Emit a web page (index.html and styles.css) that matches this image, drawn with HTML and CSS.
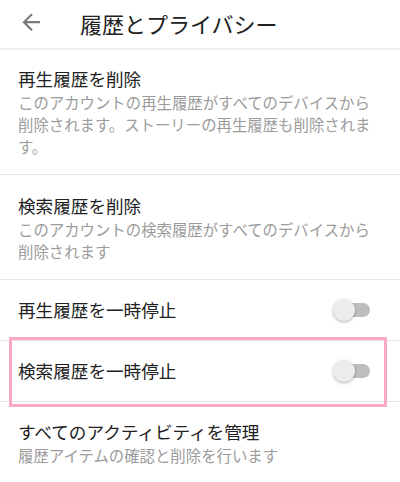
FILE: index.html
```html
<!DOCTYPE html>
<html lang="ja">
<head>
<meta charset="utf-8">
<link rel="stylesheet" href="styles.css">
</head>
<body>
<div class="screen">
  <header class="appbar">
    <svg class="back" viewBox="0 0 24 24" width="26.4" height="26.4"><path d="M20 11H7.83l5.59-5.59L12 4l-8 8 8 8 1.41-1.41L7.83 13H20v-2z" fill="#7a7a7a"/></svg>
    <h1 class="title">履歴とプライバシー</h1>
  </header>
  <div class="list">
    <div class="item">
      <div class="item-title">再生履歴を削除</div>
      <div class="item-desc">このアカウントの再生履歴がすべてのデバイスから削除されます。ストーリーの再生履歴も削除されます。</div>
    </div>
    <div class="item">
      <div class="item-title">検索履歴を削除</div>
      <div class="item-desc">このアカウントの検索履歴がすべてのデバイスから削除されます</div>
    </div>
    <div class="item toggle-row">
      <div class="item-title">再生履歴を一時停止</div>
      <div class="switch"><span class="track"></span><span class="thumb"></span></div>
    </div>
    <div class="item toggle-row">
      <div class="item-title">検索履歴を一時停止</div>
      <div class="switch"><span class="track"></span><span class="thumb"></span></div>
    </div>
    <div class="item last">
      <div class="item-title">すべてのアクティビティを管理</div>
      <div class="item-desc">履歴アイテムの確認と削除を行います</div>
    </div>
  </div>
  <div class="highlight"></div>
</div>
</body>
</html>
```

FILE: styles.css
```css
html, body {
  margin: 0;
  padding: 0;
  background: #ffffff;
}
body {
  font-family: "Noto Sans CJK JP", "Noto Sans", sans-serif;
  color: #212121;
}
.screen {
  position: relative;
  width: 400px;
  height: 482px;
  overflow: hidden;
  background: #ffffff;
}
.appbar {
  position: relative;
  z-index: 1;
  height: 48px;
  display: flex;
  align-items: center;
  padding-left: 17.6px;
  background: #ffffff;
  box-shadow: 0 1px 3px rgba(0, 0, 0, 0.12);
  box-sizing: border-box;
}
.back {
  display: block;
  flex: none;
  margin-top: -3px;
}
.title {
  margin: 0 0 0 36px;
  font-size: 22px;
  font-weight: 400;
  line-height: 26px;
  margin-top: -3px;
  color: #212121;
}
.list {
  display: flex;
  flex-direction: column;
}
.item {
  padding: 19px 18px 17px 18px;
  border-bottom: 1px solid #e6e6e6;
}
.item-title {
  font-size: 17.6px;
  line-height: 24px;
  color: #212121;
}
.item-desc {
  font-size: 15.4px;
  line-height: 22px;
  color: #9b9b9b;
}
.toggle-row {
  height: 60px;
  padding: 0 30px 0 18px;
  display: flex;
  align-items: center;
  justify-content: space-between;
}
.toggle-row .item-title {
  margin-top: -1px;
}
.last {
  padding-top: 18px;
  border-bottom: none;
}
.switch {
  position: relative;
  width: 37px;
  height: 22px;
  flex: none;
}
.track {
  position: absolute;
  left: 2px;
  right: 0;
  top: 4px;
  height: 14px;
  border-radius: 7px;
  background: #bdbdbd;
}
.thumb {
  position: absolute;
  left: 0;
  top: 0;
  width: 22px;
  height: 22px;
  border-radius: 50%;
  background: #ececec;
  box-shadow: 0 1px 3px rgba(0, 0, 0, 0.3);
}
.highlight {
  position: absolute;
  left: 9px;
  top: 337px;
  width: 378px;
  height: 70px;
  box-sizing: border-box;
  border: 3px solid #f7a9c7;
  pointer-events: none;
}
```
